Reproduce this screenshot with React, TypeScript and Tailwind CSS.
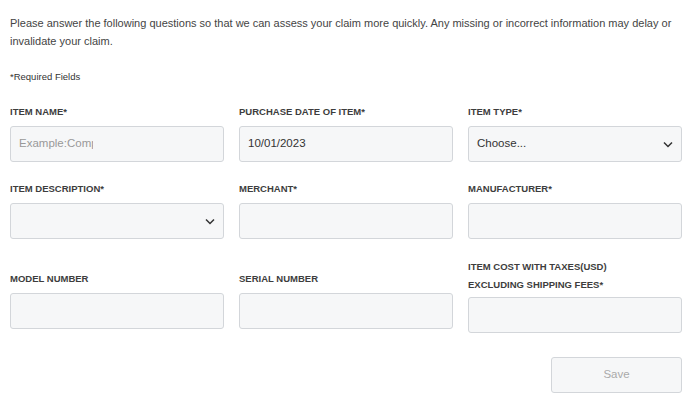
import React from 'react';

const box =
  'h-[36px] w-full rounded-[3px] border border-[#d3d6da] bg-[#f6f7f8] flex items-center px-[8px] text-[11.5px] text-[#333]';

function Label({ children }: { children: React.ReactNode }) {
  return (
    <div className="text-[9.5px] font-bold leading-[18px] text-[#3d3d3d] uppercase">
      {children}
    </div>
  );
}

function Chevron() {
  return (
    <svg width="10" height="7" viewBox="0 0 10 7" className="ml-auto">
      <path d="M1 1.5 L5 5.5 L9 1.5" fill="none" stroke="#333" strokeWidth="1.5" />
    </svg>
  );
}

function Field({
  label,
  children,
  className = '',
  gap = 'mt-[5px]',
}: {
  label: React.ReactNode;
  children?: React.ReactNode;
  className?: string;
  gap?: string;
}) {
  return (
    <div className={`flex flex-col ${className}`}>
      <Label>{label}</Label>
      <div className={`${gap} ${box}`}>{children}</div>
    </div>
  );
}

export default function App() {
  return (
    <div
      className="min-h-screen bg-white pl-[10px] pr-[18px] pt-[14px] text-[#444]"
      style={{ fontFamily: '"Liberation Sans", Arial, sans-serif' }}
    >
      <p className="text-[11px] leading-[18px] text-[#444]">
        Please answer the following questions so that we can assess your claim more quickly. Any missing or incorrect
        information may delay or invalidate your claim.
      </p>

      <p className="mt-[18px] text-[9.5px] leading-[18px] text-[#333]">*Required Fields</p>

      {/* first row */}
      <div className="mt-[17px] grid grid-cols-3 gap-x-[15px]">
        <Field label="Item Name*">
          <input
            className="w-[74px] bg-transparent outline-none text-[11.5px] placeholder:text-[#999]"
            placeholder="Example:Computer"
          />
        </Field>
        <Field label="Purchase Date of Item*">
          <span>10/01/2023</span>
        </Field>
        <Field label="Item Type*">
          <span>Choose...</span>
          <Chevron />
        </Field>
      </div>

      {/* second row */}
      <div className="mt-[18px] grid grid-cols-3 gap-x-[15px]">
        <Field label="Item Description*">
          <Chevron />
        </Field>
        <Field label="Merchant*" />
        <Field label="Manufacturer*" />
      </div>

      {/* third row */}
      <div className="mt-[19px] grid grid-cols-3 gap-x-[15px]">
        <Field label="Model Number" className="mt-[12px]" />
        <Field label="Serial Number" className="mt-[12px]" />
        <Field
          label={
            <>
              Item Cost with Taxes(USD)
              <br />
              Excluding Shipping Fees*
            </>
          }
          gap="mt-[3px]"
        />
      </div>

      <div className="mt-[24px] flex justify-end">
        <button className="h-[36px] w-[131px] rounded-[3px] border border-[#d3d6da] bg-[#f6f7f8] text-[11.5px] text-[#aaa]">
          Save
        </button>
      </div>
    </div>
  );
}
